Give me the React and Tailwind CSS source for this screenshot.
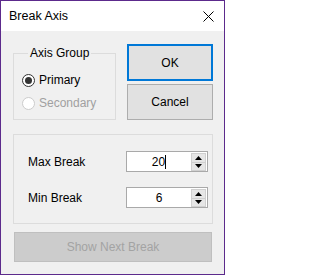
import React from "react";

function Spinner() {
  return (
    <div className="flex flex-col w-[15px] h-[18px] mt-[1px] mr-[1px] border border-[#d0d0d0] bg-[#e6e6e6]">
      <div className="flex-1 flex items-center justify-center border-b border-[#d0d0d0]">
        <svg width="7" height="4" viewBox="0 0 7 4">
          <path d="M0 4 L3.5 0 L7 4 Z" fill="#000" />
        </svg>
      </div>
      <div className="flex-1 flex items-center justify-center">
        <svg width="7" height="4" viewBox="0 0 7 4">
          <path d="M0 0 L3.5 4 L7 0 Z" fill="#000" />
        </svg>
      </div>
    </div>
  );
}

function NumberRow({ label, value, caret }) {
  return (
    <div className="flex items-center justify-between">
      <span>{label}</span>
      <div className="flex items-start w-[82px] h-[21px] bg-white border border-[#a9a9a9]">
        <div className="flex-1 flex items-center justify-center h-full text-black">
          {value}
          {caret && <span className="inline-block w-px h-[14px] bg-black" />}
        </div>
        <Spinner />
      </div>
    </div>
  );
}

function Radio({ label, checked, disabled }) {
  return (
    <div className="flex items-center gap-[4px]">
      <span
        className={
          checked
            ? "flex items-center justify-center w-[13px] h-[13px] rounded-full border border-[#333] bg-white"
            : "flex items-center justify-center w-[13px] h-[13px] rounded-full border border-[#cccccc] bg-white"
        }
      >
        {checked && <span className="w-[7px] h-[7px] rounded-full bg-[#333]" />}
      </span>
      <span className={disabled ? "text-[#a0a0a0]" : "text-black"}>{label}</span>
    </div>
  );
}

export default function App() {
  return (
    <div
      className="w-[225px] h-[275px] flex flex-col border border-[#5c2a8c] bg-[#f0f0f0] text-[12px] text-black"
      style={{ fontFamily: '"Liberation Sans", Arial, sans-serif' }}
    >
      {/* title bar */}
      <div className="h-[30px] bg-white flex items-center justify-between pl-[8px] pr-[10px]">
        <span className="text-[12.5px]">Break Axis</span>
        <svg width="11" height="11" viewBox="0 0 11 11">
          <path d="M0.5 0.5 L10.5 10.5 M10.5 0.5 L0.5 10.5" stroke="#000" strokeWidth="1" />
        </svg>
      </div>

      <div className="flex flex-col pl-[12px] pr-[11px] pt-[13px]">
        <div className="flex items-start justify-between">
          <fieldset className="w-[103px] h-[76px] border border-[#dcdcdc] pl-[8px] pt-[9px] m-0">
            <legend className="ml-[6px] px-[2px]">Axis Group</legend>
            <div className="flex flex-col gap-[5px]">
              <Radio label="Primary" checked />
              <Radio label="Secondary" disabled />
            </div>
          </fieldset>
          <div className="flex flex-col gap-[3px]">
            <button className="w-[86px] h-[37px] bg-[#e1e1e1] border-2 border-[#0078d7]">OK</button>
            <button className="w-[86px] h-[36px] bg-[#e1e1e1] border border-[#adadad]">Cancel</button>
          </div>
        </div>

        <div className="mt-[14px] h-[90px] border border-[#dcdcdc] pl-[14px] pr-[4px] pt-[16px] flex flex-col gap-[15px]">
          <NumberRow label="Max Break" value="20" caret />
          <NumberRow label="Min Break" value="6" />
        </div>

        <button className="mt-[8px] mx-[1px] h-[30px] bg-[#cccccc] border border-[#bfbfbf] text-[#a3a3a3]">
          Show Next Break
        </button>
      </div>
    </div>
  );
}
